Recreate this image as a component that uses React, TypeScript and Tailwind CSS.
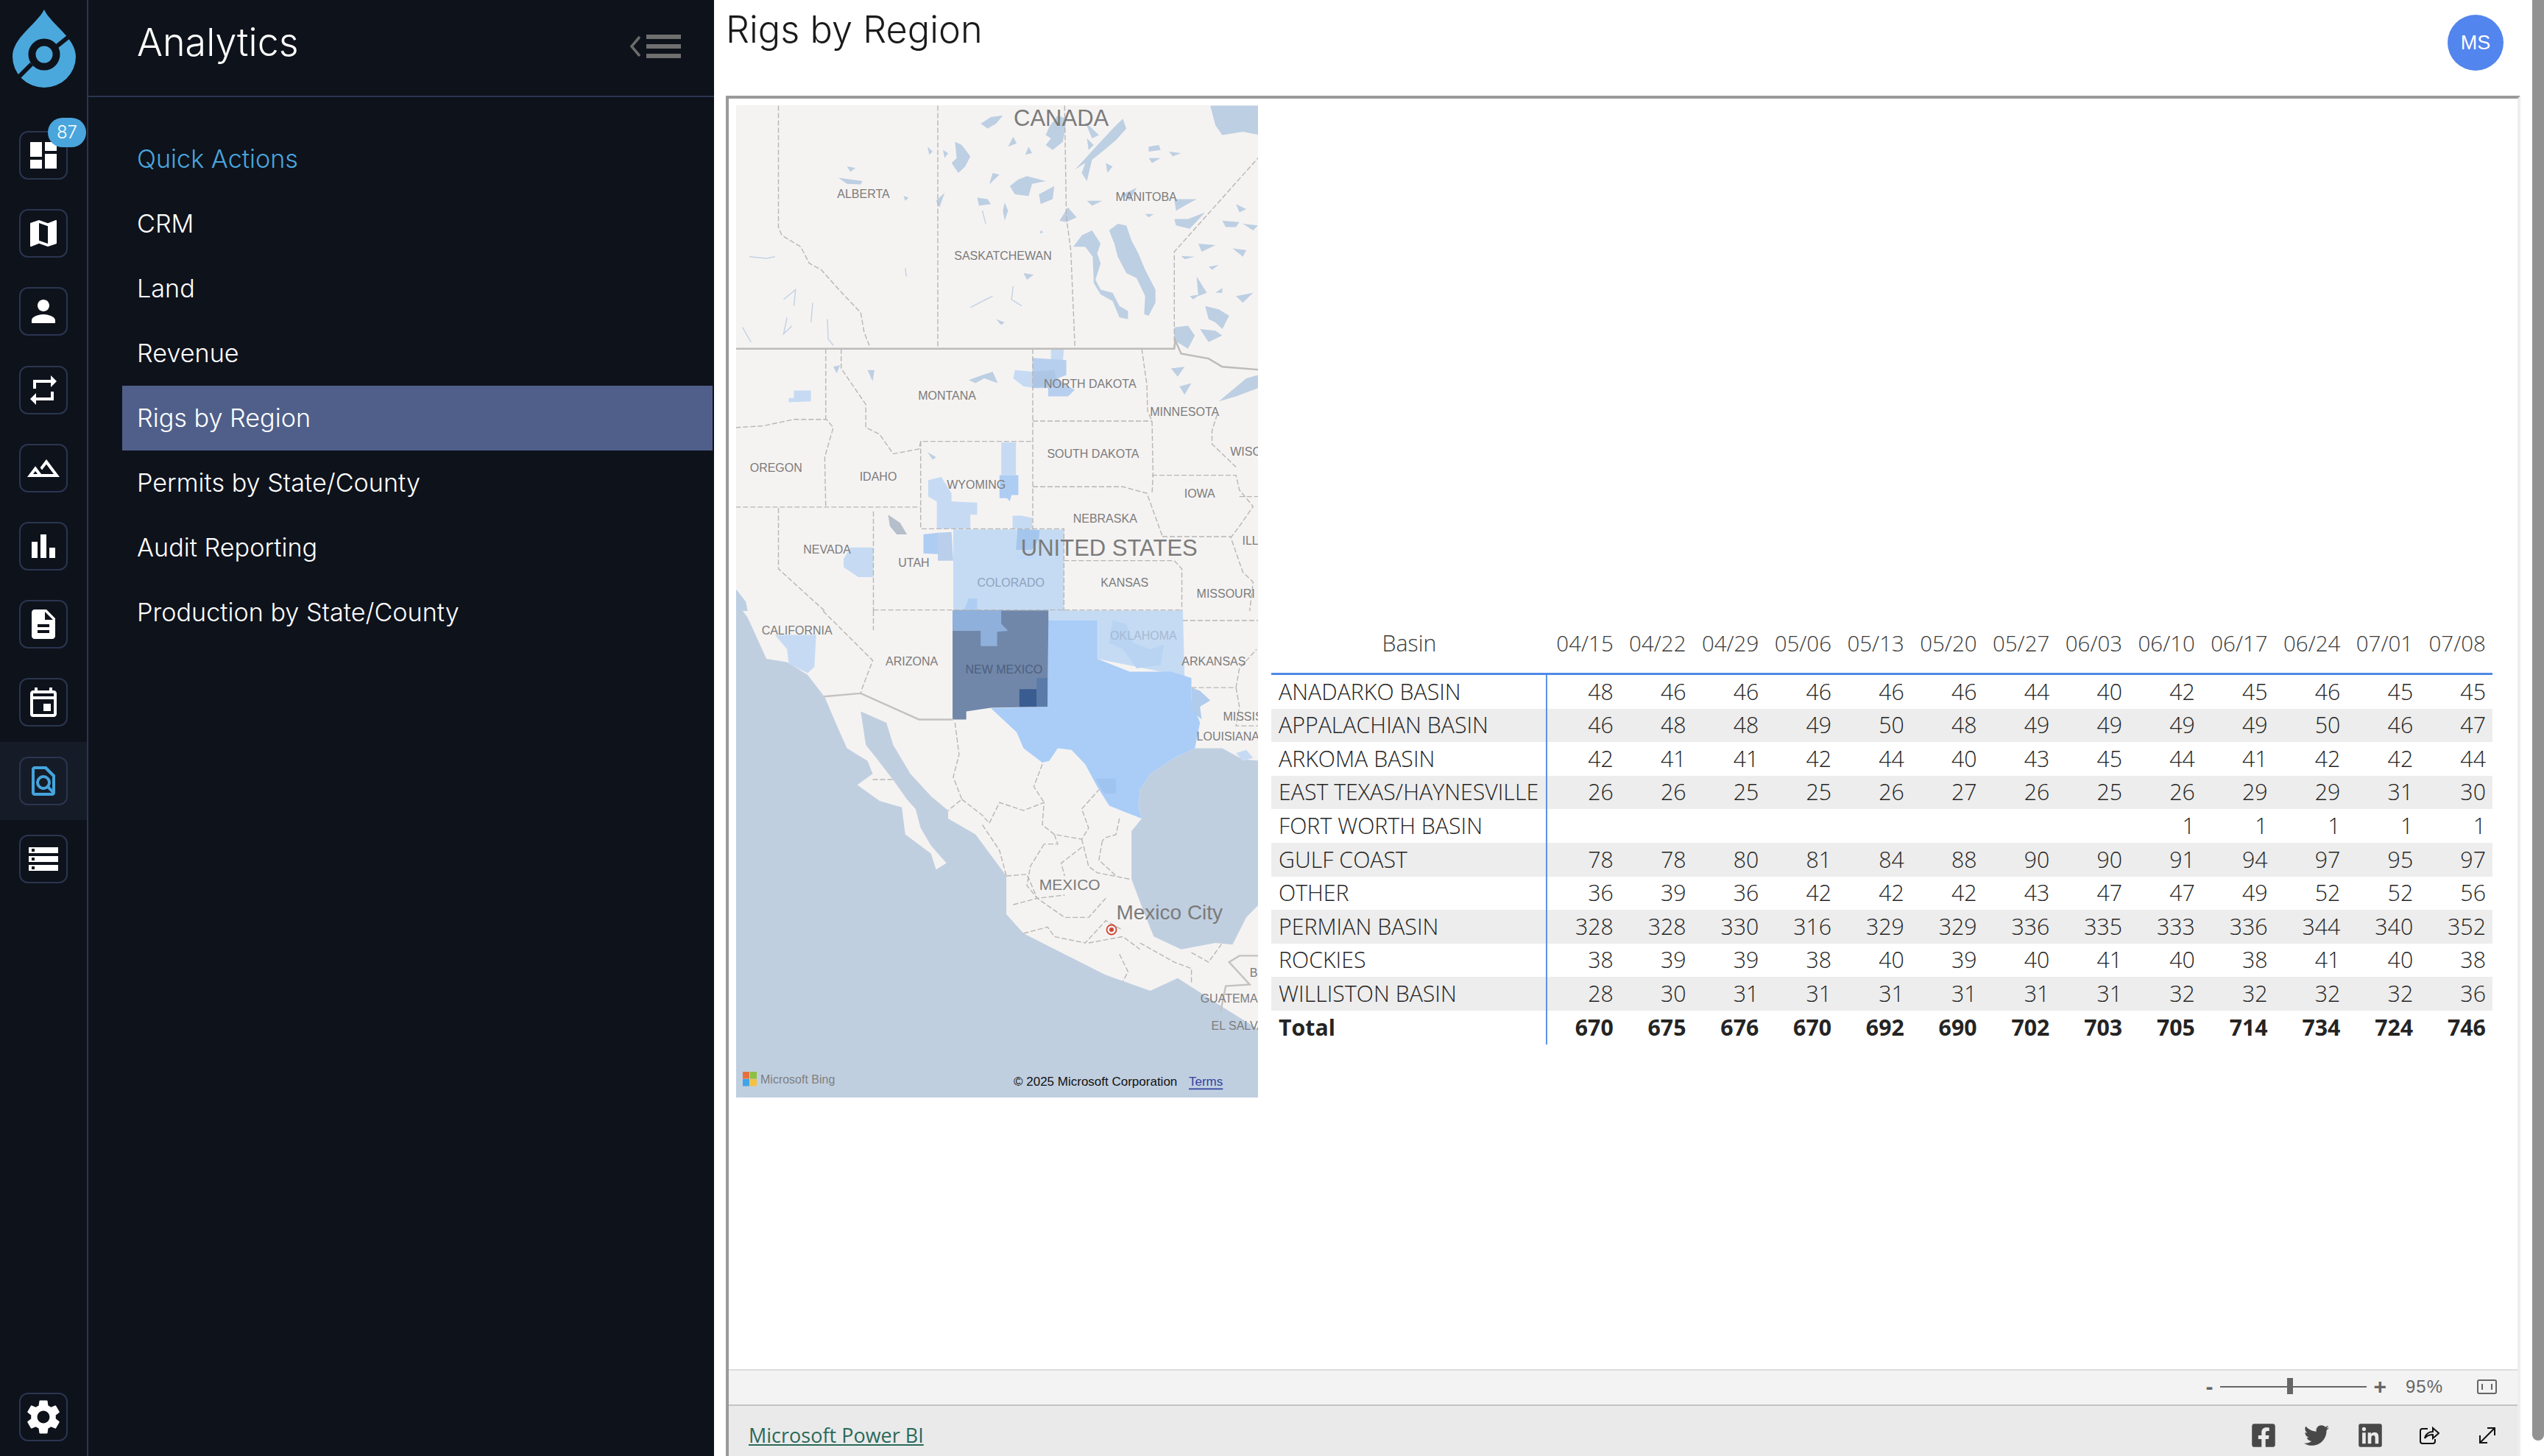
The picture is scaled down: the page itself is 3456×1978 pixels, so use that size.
import { FaFacebookSquare, FaLinkedin, FaTwitter } from 'react-icons/fa';
import {
    MdBarChart,
    MdDashboard,
    MdDescription,
    MdMap,
    MdOutlineEvent,
    MdOutlineFindInPage,
    MdOutlineLandscape,
    MdPerson,
    MdRepeat,
    MdSettings,
    MdStorage,
} from 'react-icons/md';

const railIcons = [MdDashboard, MdMap, MdPerson, MdRepeat, MdOutlineLandscape, MdBarChart, MdDescription, MdOutlineEvent, MdOutlineFindInPage, MdStorage];

const menu = ['Quick Actions', 'CRM', 'Land', 'Revenue', 'Rigs by Region', 'Permits by State/County', 'Audit Reporting', 'Production by State/County'];

const dates = ['04/15', '04/22', '04/29', '05/06', '05/13', '05/20', '05/27', '06/03', '06/10', '06/17', '06/24', '07/01', '07/08'];

const rows: [string, (number | null)[]][] = [
    ['ANADARKO BASIN', [48, 46, 46, 46, 46, 46, 44, 40, 42, 45, 46, 45, 45]],
    ['APPALACHIAN BASIN', [46, 48, 48, 49, 50, 48, 49, 49, 49, 49, 50, 46, 47]],
    ['ARKOMA BASIN', [42, 41, 41, 42, 44, 40, 43, 45, 44, 41, 42, 42, 44]],
    ['EAST TEXAS/HAYNESVILLE', [26, 26, 25, 25, 26, 27, 26, 25, 26, 29, 29, 31, 30]],
    ['FORT WORTH BASIN', [null, null, null, null, null, null, null, null, 1, 1, 1, 1, 1]],
    ['GULF COAST', [78, 78, 80, 81, 84, 88, 90, 90, 91, 94, 97, 95, 97]],
    ['OTHER', [36, 39, 36, 42, 42, 42, 43, 47, 47, 49, 52, 52, 56]],
    ['PERMIAN BASIN', [328, 328, 330, 316, 329, 329, 336, 335, 333, 336, 344, 340, 352]],
    ['ROCKIES', [38, 39, 39, 38, 40, 39, 40, 41, 40, 38, 41, 40, 38]],
    ['WILLISTON BASIN', [28, 30, 31, 31, 31, 31, 31, 31, 32, 32, 32, 32, 36]],
];
const totals = [670, 675, 676, 670, 692, 690, 702, 703, 705, 714, 734, 724, 746];

// map pieces are traced in two sets of coordinates, upper and lower half
const upper = 'translate(-10,-13) scale(0.4656,0.4464)';
const lower = 'translate(-10,687) scale(0.4656,0.4337)';

const upperDashes = [
    '145,30 145,400 155,425 210,460 235,510 270,530 330,600 385,660 395,720 410,760',
    '610,30 610,765',
    '980,30 985,370 998,470 1010,765',
    '1300,770 1300,475 1544,190',
    '283,770 283,985',
    '328,770 328,830 400,940 400,1010 440,1030 480,1090 555,1075 560,1052 887,1052',
    '887,770 887,1318',
    '20,1252 560,1252',
    '20,1010 100,1005 190,985 285,985 305,1010 280,1100 283,1250',
    '145,1255 145,1440 280,1568',
    '422,1265 422,1568',
    '560,1052 560,1318 978,1318 978,1568',
    '422,1565 1322,1565',
    '887,990 1235,990',
    '1205,770 1220,880 1222,960 1235,990 1238,1155 1235,1210',
    '887,1190 1150,1190 1220,1210 1265,1340',
    '1235,1155 1480,1155 1490,1200 1530,1250 1490,1310 1465,1345 1500,1450 1530,1480 1520,1568',
    '1265,1342 1465,1342',
    '978,1415 1300,1415 1322,1440 1322,1568',
    '1425,970 1410,1020 1410,1060 1480,1130',
    '1490,1220 1544,1220',
];

const lowerDashes = [
    '275,0 420,155 390,240 385,258',
    '422,0 422,60',
    '1325,30 1544,30',
    '1350,240 1480,240 1490,180 1540,120',
    '1480,240 1490,300 1480,360 1544,360',
    '660,350 672,450 655,520 680,590 640,625',
    '680,590 740,640 760,665 790,600 860,625 920,600 915,670 950,700 1030,715 1050,680 1030,620 1080,560',
    '915,480 890,550 920,600',
    '740,670 790,750 810,830',
    '920,730 880,800 870,860 900,900 980,890',
    '950,700 960,730 920,730',
    '1030,715 1050,800 1075,820 1170,840',
    '1090,720 1080,780 1130,830',
    '1030,740 970,790 980,830',
    '810,830 870,825 900,900',
    '830,920 900,900 980,960 1050,960 1100,900',
    '860,1010 930,990 950,1020 1040,1040 1100,970 1150,1000',
    '1050,1040 1150,1020 1200,1060',
    '1140,1075 1165,1130 1150,1160',
    '1200,1040 1300,1100 1350,1120 1350,1170',
    '1350,1070 1400,1100 1440,1040',
    '1140,650 1130,700 1100,710 1090,720',
    '420,528 480,528',
];

const lakes = [
    '1110,410 1135,390 1160,395 1175,440 1195,480 1215,530 1245,590 1245,630 1225,670 1212,665 1215,610 1190,555 1160,540 1135,490 1125,450',
    '1030,425 1060,410 1085,450 1075,480 1085,510 1070,560 1085,590 1120,600 1140,640 1165,655 1165,680 1140,675 1120,625 1085,605 1065,570 1062,490 1040,460 1005,460',
    '935,95 960,60 985,70 980,110 975,140 945,165 925,150 940,130 925,120',
    '735,85 765,65 800,60 780,85 755,100',
    '1085,140 1125,95 1150,70 1160,100 1130,135 1090,170 1060,195 1045,260 1030,235 1040,205 1010,225',
    '660,140 680,150 705,185 690,215 670,235 650,205 665,190',
    '820,275 845,255 870,245 925,260 885,268 875,305 835,300',
    '905,300 950,275 945,315 910,330',
    '320,250 355,255 390,260 385,270 345,268',
    '345,215 370,220 355,232',
    '725,310 755,315 765,330 730,335',
    '805,325 815,350 805,380 800,350',
    '1225,155 1255,150 1260,165 1225,170',
    '1285,170 1320,175 1295,185',
    '1225,190 1260,190 1235,205',
    '1300,315 1365,315 1330,335 1305,350',
    '1300,375 1340,375 1390,355 1345,405 1305,395',
    '1370,450 1420,455 1380,475',
    '1470,465 1510,470 1500,490',
    '1320,488 1360,490 1330,498',
    '1400,520 1430,515 1410,530',
    '1390,640 1430,650 1460,670 1440,710 1420,690 1400,680',
    '1480,610 1530,600 1500,630',
    '1300,705 1340,700 1360,730 1340,770 1300,745',
    '1375,710 1420,715 1440,730 1400,750',
    '860,540 890,545 870,560',
    '780,680 805,690 795,698',
    '605,320 630,295 615,340',
    '1290,830 1330,825 1310,855',
    '1315,885 1350,875 1330,910',
    '1430,930 1510,860 1544,850 1544,890 1480,915',
    '405,835 425,835 420,870',
    '305,825 325,820 315,845',
    '580,1085 605,1100 595,1108',
    '700,865 740,850 770,840 785,875 745,860 720,875',
    '1040,80 1080,120 1060,130',
    '1045,320 1090,320 1060,335',
    '990,340 1015,370 985,385 965,380',
    '1440,380 1490,385 1480,400 1450,400',
    '1500,390 1544,395 1530,410',
    '1215,360 1240,360 1225,370',
    '1045,130 1065,150 1050,165',
    '770,235 790,240 760,270',
    '1100,205 1120,215 1105,235',
    '1150,300 1190,280 1170,320',
    '580,155 595,170 585,180',
    '625,165 640,175 630,190',
    '830,125 840,145 815,155',
    '875,155 885,175 865,180',
    '910,410 918,415 908,420',
    '1480,330 1510,345 1490,355',
    '1365,550 1395,600 1370,610',
    '1345,610 1375,605 1355,620',
    '1420,600 1440,585 1440,600',
    '510,305 525,310 515,320',
];

const lines = [
    '60,490 110,495 135,490',
    '160,620 195,590 190,640',
    '245,630 240,690',
    '170,675 160,725 185,700',
    '288,680 290,740 305,760',
    '40,705 65,750',
    '705,645 750,620 770,610',
    '830,580 825,620 855,640',
    '515,525 518,550',
    '740,350 750,390',
];

function Label({ half, x, y, size = 16, color = '#7b7b7b', start, children }: { half: 'a' | 'b'; x: number; y: number; size?: number; color?: string; start?: boolean; children: string }) {
    const mapX = x * 0.4656 - 10;
    const mapY = half === 'a' ? y * 0.4464 - 13 : y * 0.4337 + 687;
    return (
        <text x={mapX} y={mapY} fontSize={size} fill={color} textAnchor={start ? 'start' : 'middle'} dominantBaseline="central">
            {children}
        </text>
    );
}

function RegionMap() {
    return (
        <svg viewBox="0 0 709 1348" className="w-[709px] h-[1348px] shrink-0 font-['Liberation_Sans',sans-serif]">
            <rect width="709" height="1348" fill="#f5f3f2" />

            <g transform={lower} fill="#c0cfe0">
                <polygon points="20,-30 55,20 110,150 170,160 230,200 280,270 320,370 345,430 405,470 420,510 375,545 440,595 505,615 515,700 590,760 605,810 635,790 590,735 560,680 545,620 520,590 480,530 430,460 400,420 385,315 460,350 480,420 530,510 590,580 640,625 640,650 720,700 810,830 810,950 860,1010 970,1070 1100,1140 1230,1190 1310,1150 1440,1240 1560,1320 1560,1525 20,1525" />
                <polygon points="1360,430 1300,460 1230,510 1200,560 1195,610 1205,650 1175,690 1175,840 1210,940 1240,1020 1320,1060 1420,1040 1470,1045 1510,960 1560,905 1560,470 1500,465 1440,430" />
            </g>
            <g transform={upper} fill="#bdcfe2">
                <polygon points="1405,30 1560,30 1560,122 1500,110 1440,120 1420,90" />
                {lakes.map((p) => <polygon key={p} points={p} />)}
                <polygon points="465,1275 500,1300 520,1335 490,1335 470,1310" fill="#b5bfcb" />
                <polygon points="20,1500 50,1540 55,1568 20,1568" />
            </g>
            <g transform={upper} fill="none" stroke="#c3d3e4" strokeWidth="1.5">
                {lines.map((p) => <polyline key={p} points={p} vectorEffect="non-scaling-stroke" />)}
            </g>

            {/* shaded regions */}
            <g transform={upper}>
                <rect x="655" y="1320" width="323" height="250" fill="#c5dbf4" />
                <polygon fill="#c6dbf3" points="582,1170 620,1160 650,1210 650,1235 725,1238 725,1275 705,1275 705,1318 607,1318 607,1235 582,1220" />
                <rect x="795" y="1055" width="43" height="100" fill="#c6dbf3" />
                <polygon fill="#aecdf3" points="790,1155 845,1155 845,1215 825,1215 820,1235 812,1225 790,1225" />
                <polygon fill="#c6dbf3" points="828,1278 855,1278 885,1285 885,1318 828,1318" />
                <polygon fill="#a5c6ec" points="843,1318 907,1322 905,1350 885,1382 838,1382" />
                <polygon fill="#c0d9f6" points="840,1395 900,1395 900,1410 838,1410" />
                <polygon fill="#c6dbf3" points="940,772 978,772 975,805 940,805" />
                <polygon fill="#c6dbf3" points="835,835 885,840 885,888 860,885 830,860" />
                <polygon fill="#b7cfee" points="886,798 985,805 985,850 960,860 990,885 1010,895 990,915 932,915 932,890 886,890" />
                <polygon fill="#aec6e6" points="886,840 950,835 960,880 886,890" />
                <polygon fill="#c6dbf3" points="190,897 240,897 240,930 175,933 175,920 190,920" />
                <polygon fill="#c6dbf3" points="355,1375 422,1375 422,1465 378,1465 335,1435 335,1410" />
                <polygon fill="#aecdf3" points="568,1335 610,1330 610,1395 568,1393" />
                <polygon fill="#b9cfeb" points="610,1330 650,1328 655,1415 610,1415" />
                <polygon fill="#aecdf3" points="700,1530 725,1530 725,1570 685,1570" />
            </g>
            <g transform={lower}>
                <polygon fill="#c5dbf4" points="935,-2 1325,-2 1330,205 1075,150 932,30" />
                <polygon fill="#b9d4f3" points="1120,30 1160,40 1180,100 1230,120 1270,105 1260,170 1190,180 1150,120 1110,100" />
                <polygon fill="#a9cdf7" points="932,30 1075,30 1075,150 1170,190 1290,190 1350,210 1350,280 1375,350 1360,430 1300,460 1230,510 1200,560 1195,610 1205,650 1180,640 1110,610 1075,550 1040,480 1000,435 960,430 935,470 915,475 860,430 840,380 765,305 930,300" />
                <polygon fill="#9fc4f0" points="1070,525 1130,525 1130,572 1095,572" />
                <polygon fill="#7087aa" points="653,-2 933,-2 930,300 765,303 693,315 693,340 653,340" />
                <polygon fill="#8fb0db" points="653,-2 795,-2 795,40 815,62 783,65 783,110 735,110 735,62 653,62" />
                <rect x="898" y="210" width="32" height="90" fill="#5a7ba8" />
                <rect x="848" y="245" width="50" height="55" fill="#395d90" />
                <polygon fill="#c6dbf3" points="135,75 255,75 250,175 230,195 175,165 170,120" />
                <polygon fill="#b0cbec" points="1350,240 1375,250 1405,280 1375,300 1380,340 1350,310" />
                <polygon fill="#c6dbf3" points="1480,445 1510,435 1530,460 1500,470" />
            </g>

            {/* borders */}
            <g transform={upper} fill="none" stroke="#b8b6b4" strokeWidth="1.4" strokeDasharray="7 3">
                {upperDashes.map((p) => <polyline key={p} points={p} vectorEffect="non-scaling-stroke" />)}
            </g>
            <g transform={lower} fill="none" stroke="#b8b6b4" strokeWidth="1.4" strokeDasharray="7 3">
                {lowerDashes.map((p) => <polyline key={p} points={p} vectorEffect="non-scaling-stroke" />)}
            </g>
            <g transform={upper} fill="none" stroke="#bdbbb9" strokeWidth="2.4">
                <polyline points="20,770 1300,770 1303,745 1320,785 1400,800 1440,825 1560,835" vectorEffect="non-scaling-stroke" />
            </g>
            <g transform={lower} fill="none" stroke="#c4c2c0" strokeWidth="2.4">
                <polyline points="278,268 385,258 555,340 655,340" vectorEffect="non-scaling-stroke" />
                <polyline points="1560,1080 1490,1080 1460,1100 1520,1170 1450,1175 1435,1255" vectorEffect="non-scaling-stroke" />
            </g>

            <Label half="a" x={970} y={68} size={31}>CANADA</Label>
            <Label half="a" x={393} y={300}>ALBERTA</Label>
            <Label half="a" x={800} y={487}>SASKATCHEWAN</Label>
            <Label half="a" x={1218} y={309}>MANITOBA</Label>
            <Label half="a" x={1054} y={878}>NORTH DAKOTA</Label>
            <Label half="a" x={637} y={912}>MONTANA</Label>
            <Label half="a" x={1330} y={963}>MINNESOTA</Label>
            <Label half="a" x={1063} y={1090}>SOUTH DAKOTA</Label>
            <Label half="a" x={1463} y={1082} start>WISCONSIN</Label>
            <Label half="a" x={138} y={1133}>OREGON</Label>
            <Label half="a" x={436} y={1159}>IDAHO</Label>
            <Label half="a" x={722} y={1184}>WYOMING</Label>
            <Label half="a" x={1374} y={1210}>IOWA</Label>
            <Label half="a" x={1098} y={1286}>NEBRASKA</Label>
            <Label half="a" x={1498} y={1355} start>ILLINOIS</Label>
            <Label half="a" x={287} y={1380}>NEVADA</Label>
            <Label half="a" x={540} y={1422}>UTAH</Label>
            <Label half="a" x={1110} y={1377} size={31}>UNITED STATES</Label>
            <Label half="a" x={823} y={1482} color="#8fa3bb">COLORADO</Label>
            <Label half="a" x={1155} y={1482}>KANSAS</Label>
            <Label half="a" x={1450} y={1516}>MISSOURI</Label>
            <Label half="b" x={199} y={60}>CALIFORNIA</Label>
            <Label half="b" x={534} y={157}>ARIZONA</Label>
            <Label half="b" x={803} y={183} color="#4c5f7d">NEW MEXICO</Label>
            <Label half="b" x={1210} y={78} color="#a5b9d1">OKLAHOMA</Label>
            <Label half="b" x={1415} y={157}>ARKANSAS</Label>
            <Label half="b" x={1442} y={332} start>MISSISSIPPI</Label>
            <Label half="b" x={1365} y={393} start>LOUISIANA</Label>
            <Label half="b" x={995} y={857} size={21}>MEXICO</Label>
            <Label half="b" x={1286} y={945} size={28}>Mexico City</Label>
            <Label half="b" x={1520} y={1133} start>BELIZE</Label>
            <Label half="b" x={1376} y={1213} start>GUATEMALA</Label>
            <Label half="b" x={1408} y={1300} start>EL SALVADOR</Label>

            <circle cx="510" cy="1120" r="6.5" fill="#f5f3f2" stroke="#cf4632" strokeWidth="1.8" />
            <circle cx="510" cy="1120" r="3" fill="#cf4632" />

            {/* attribution */}
            <rect x="9" y="1313" width="9" height="9.5" fill="#e8703f" />
            <rect x="19" y="1313" width="9" height="9.5" fill="#8fbf3f" />
            <rect x="9" y="1323" width="9" height="9.5" fill="#3fa5e8" />
            <rect x="19" y="1323" width="9" height="9.5" fill="#f5c13f" />
            <text x="33" y="1323" fontSize="16" fill="#7f7f7f" dominantBaseline="central">Microsoft Bing</text>
            <text x="377" y="1326" fontSize="17" fill="#111" dominantBaseline="central">© 2025 Microsoft Corporation</text>
            <text x="615" y="1326" fontSize="17" fill="#3341a0" dominantBaseline="central" textDecoration="underline">Terms</text>
        </svg>
    );
}

function RigsTable() {
    return (
        <div className="w-[1659px] ml-[18px] mt-[691px] text-[30.3px] leading-none text-[#252423] font-['Open_Sans',sans-serif] font-light">
            <div className="flex h-[83px] items-center border-b-[3px] border-[#4f8ae8] text-[#3b3a39]">
                <div className="w-[375px] text-center">Basin</div>
                {dates.map((d) => (
                    <div key={d} className="flex-1 text-right pr-[9px] text-[29.5px]">{d}</div>
                ))}
            </div>
            {rows.map(([name, values], i) => (
                <div key={name} className={`flex h-[45.6px] items-center ${i % 2 === 1 ? 'bg-[#ededed]' : ''}`}>
                    <div className="w-[375px] h-full flex items-center pl-[10px] border-r-2 border-[#5d92e6] whitespace-nowrap">{name}</div>
                    {values.map((v, j) => (
                        <div key={j} className="flex-1 text-right pr-[9px]">{v}</div>
                    ))}
                </div>
            ))}
            <div className="flex h-[45.6px] items-center font-bold">
                <div className="w-[375px] h-full flex items-center pl-[10px] border-r-2 border-[#5d92e6]">Total</div>
                {totals.map((v, j) => (
                    <div key={j} className="flex-1 text-right pr-[9px]">{v}</div>
                ))}
            </div>
        </div>
    );
}

export default function App() {
    return (
        <div className="relative flex w-[3456px] h-[1978px] overflow-hidden bg-white font-['Inter',sans-serif]">
            {/* icon rail */}
            <aside className="w-[120px] shrink-0 flex flex-col bg-[#0e121b] border-r-2 border-[#2a3550]">
                <div className="h-[158px] pt-[13px] pl-[17px]">
                    <svg width="86" height="106" viewBox="0 0 86 106">
                        <path d="M43 0C52 20 86 38 86 64A43 42 0 0 1 0 64C0 38 33 20 43 0Z" fill="#4ba8dc" />
                        <circle cx="43" cy="61" r="16.5" fill="none" stroke="#0e121b" strokeWidth="10" />
                        <path d="M80 34L60 50M26 74L6 94" stroke="#0e121b" strokeWidth="6" />
                    </svg>
                </div>
                {railIcons.map((Icon, i) => (
                    <div key={i} className={`relative h-[106.2px] flex items-center justify-center ${i === 8 ? 'bg-[#151c27]' : ''}`}>
                        <div className="w-[66px] h-[66px] flex items-center justify-center rounded-[12px] border-2 border-[#2a3550]">
                            <Icon className={i === 8 ? 'text-[#45a4dc]' : 'text-white'} size={48} />
                        </div>
                        {i === 0 && (
                            <span className="absolute left-[65px] top-[2px] w-[52px] h-[40px] flex items-center justify-center rounded-[20px] bg-[#4aa5dd] text-white text-[24px] font-light">87</span>
                        )}
                    </div>
                ))}
                <div className="mt-auto mb-[20px] mx-auto w-[66px] h-[66px] flex items-center justify-center rounded-[12px] border-2 border-[#2a3550]">
                    <MdSettings className="text-white" size={56} />
                </div>
            </aside>

            {/* menu panel */}
            <nav className="w-[850px] shrink-0 bg-[#0e121b]">
                <div className="h-[132px] flex items-center justify-between pl-[66px] pr-[45px] pb-[14px] border-b-2 border-[#2a3550]">
                    <span className="text-white text-[52px] font-light">Analytics</span>
                    <svg width="70" height="32" viewBox="0 0 70 32" className="mt-[10px]">
                        <path d="M14 3L3 16L14 29" fill="none" stroke="#6b6b6b" strokeWidth="3.5" />
                        <path d="M23 0H70V6H23ZM23 13H70V19H23ZM23 26H70V32H23Z" fill="#6f6f6f" />
                    </svg>
                </div>
                <ul className="pt-[40px] pl-[46px] pr-[2px]">
                    {menu.map((item, i) => (
                        <li key={item} className={`h-[88px] flex items-center pl-[20px] text-[34.2px] font-light ${i === 0 ? 'text-[#4aa5dd]' : 'text-white'} ${i === 4 ? 'bg-[#4f5f8a]' : ''}`}>
                            {item}
                        </li>
                    ))}
                </ul>
            </nav>

            {/* main content */}
            <main className="flex-1 min-w-0 flex flex-col">
                <header className="h-[130px] shrink-0 flex justify-between pl-[16px] pr-[55px]">
                    <h1 className="text-[50.5px] leading-[80px] text-[#1a1a1a] font-light">Rigs by Region</h1>
                    <div className="mt-[20px] w-[76px] h-[76px] rounded-full bg-[#5285ed] flex items-center justify-center text-white text-[27px] font-['Liberation_Sans',sans-serif]">MS</div>
                </header>
                <div className="ml-[16px] w-[2438px] flex-1 min-h-0 flex flex-col border-4 border-t-[#9a9a9a] border-l-[#9a9a9a] border-r-[#eeeeee] border-b-0 overflow-hidden">
                    <div className="flex-1 min-h-0 flex items-start pt-[9px] pl-[10px]">
                        <RegionMap />
                        <RigsTable />
                    </div>
                    <div className="h-[48px] shrink-0 flex items-center justify-end pb-[2px] bg-[#f3f3f3] border-t-2 border-[#dddddd] text-[#666666] font-['Liberation_Sans',sans-serif]">
                        <span className="text-[30px] font-bold leading-none mr-[10px]">-</span>
                        <div className="relative w-[199px] h-[2px] bg-[#666666]">
                            <span className="absolute left-[91px] top-[-11px] w-[8px] h-[22px] bg-[#666666]" />
                        </div>
                        <span className="ml-[9px] text-[30px] font-bold leading-none">+</span>
                        <span className="ml-[26px] text-[24px] tracking-[1px]">95%</span>
                        <div className="ml-[46px] mr-[28px] w-[27px] h-[20px] rounded-[3px] border-2 border-[#666666] flex items-center justify-center">
                            <span className="w-[15px] h-[8px] border-x-2 border-[#666666]" />
                        </div>
                    </div>
                    <div className="h-[70px] shrink-0 flex items-center justify-between pl-[27px] pr-[28px] pt-[12px] bg-[#eaeaea] border-t-2 border-[#c4c4c4]">
                        <a className="text-[27px] text-[#2a6a5a] underline font-['Open_Sans',sans-serif]">Microsoft Power BI</a>
                        <div className="flex items-center text-[#484848]">
                            <FaFacebookSquare size={36} />
                            <FaTwitter size={34} className="ml-[37px]" />
                            <FaLinkedin size={36} className="ml-[38px]" />
                            <svg width="28" height="26" viewBox="0 0 28 26" fill="none" stroke="#111" strokeWidth="2" className="ml-[48px]">
                                <path d="M12 4H5a3 3 0 0 0-3 3v14a3 3 0 0 0 3 3h14a3 3 0 0 0 3-3v-3" />
                                <path d="M8 17c1-6 6-9 11-9V3l8 7-8 7v-5c-4 0-8 1-11 5Z" />
                            </svg>
                            <svg width="26" height="26" viewBox="0 0 26 26" fill="none" stroke="#111" strokeWidth="2" className="ml-[52px]">
                                <path d="M3 23L23 3M13 3H23V13M3 13V23H13" />
                            </svg>
                        </div>
                    </div>
                </div>
            </main>

            {/* page scrollbar */}
            <div className="absolute right-0 top-0 w-[16px] h-[1957px] rounded-b-[8px] bg-[#929292]" />
        </div>
    );
}
